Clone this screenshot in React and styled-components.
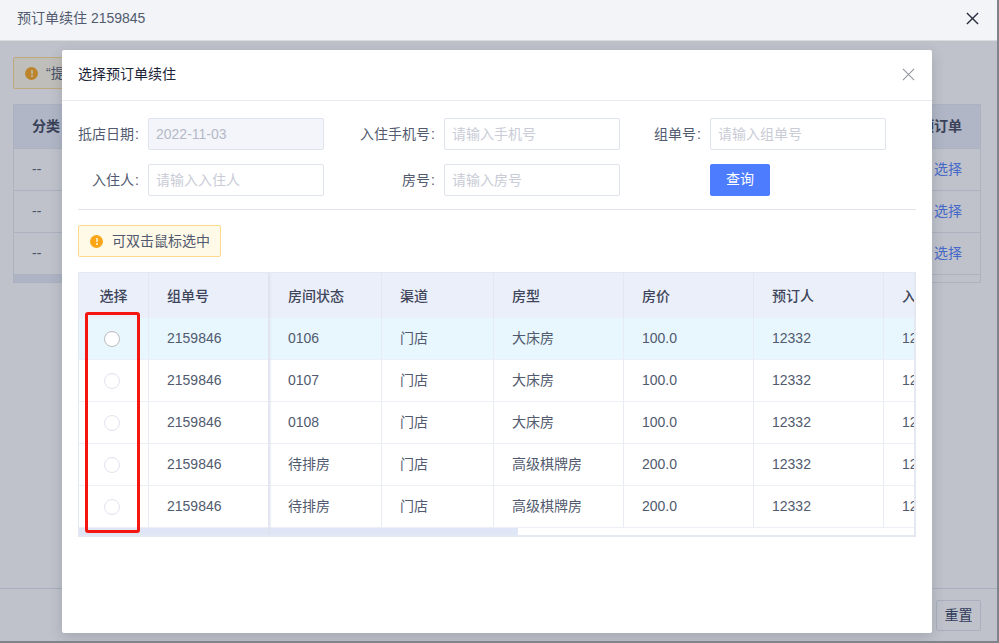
import React from "react";
import styled, { createGlobalStyle } from "styled-components";

const Global = createGlobalStyle`
  html, body {
    margin: 0;
    padding: 0;
    height: 100%;
    overflow: hidden;
    background: #fff;
    font-family: "Liberation Sans", "Noto Sans CJK SC", sans-serif;
    font-size: 14px;
    line-height: 20px;
    color: #515a6e;
  }
  * { box-sizing: border-box; }
`;

const Window = styled.div`
  position: relative;
  width: 999px;
  height: 643px;
  overflow: hidden;
  border-right: 2px solid #7f838c;
  border-bottom: 2px solid #7f838c;
  display: flex;
  flex-direction: column;
`;

const TopBar = styled.div`
  height: 41px;
  flex: none;
  display: flex;
  align-items: center;
  justify-content: space-between;
  padding: 0 18px 4px 17px;
  background: #f2f4f8;
  border-bottom: 1px solid #d9dbdf;
  color: #515a6e;
`;

const Body = styled.div`
  position: relative;
  flex: 1;
  display: flex;
  flex-direction: column;
  padding: 16px 16px 0 13px;
  background: #fff;
`;

const Notice = styled.div`
  display: flex;
  align-items: center;
  gap: ${(p) => p.$gap || 8}px;
  width: ${(p) => p.$width || "auto"};
  height: 32px;
  margin-top: ${(p) => p.$top || 0}px;
  padding: 0 11px;
  background: #fff9e8;
  border: 1px solid #ffd98c;
  border-radius: 2px;
  color: #515a6e;
  white-space: nowrap;
`;

const Dot = styled.span`
  width: 13px;
  height: 13px;
  flex: none;
  border-radius: 50%;
  background: #fba617;
  position: relative;
  &::after {
    content: "";
    position: absolute;
    left: 5.5px;
    top: 3px;
    width: 2px;
    height: 7px;
    background: linear-gradient(#ffe3ad 0 4px, transparent 4px 5px, #ffe3ad 5px);
  }
`;

const BackTable = styled.div`
  margin-top: 15px;
  height: 179px;
  border: 1px solid #e4e7f0;
`;

const BackRow = styled.div`
  display: flex;
  justify-content: space-between;
  align-items: center;
  height: ${(p) => (p.$head ? 44 : 42)}px;
  padding: 0 18px 2px;
  border-bottom: 1px solid #e4e7f0;
  background: ${(p) => (p.$head ? "#e9edf8" : "#fff")};
  font-weight: ${(p) => (p.$head ? 700 : 400)};
  color: ${(p) => (p.$head ? "#3b4257" : "#515a6e")};
`;

const BackLink = styled.span`
  color: #4d7cfe;
`;

const BackThumb = styled.div`
  width: 200px;
  height: 7px;
  background: #e6eaf6;
`;

const Footer = styled.div`
  position: absolute;
  left: 0;
  right: 0;
  bottom: 0;
  height: 53px;
  display: flex;
  justify-content: flex-end;
  align-items: center;
  padding-right: 16px;
  border-top: 1px solid #dfe3ee;
`;

const GhostButton = styled.button`
  width: 45px;
  height: 31px;
  padding: 0;
  background: #fff;
  border: 1px solid #dfe3ee;
  border-radius: 2px;
  color: #2f3a5c;
  font: inherit;
`;

const Overlay = styled.div`
  position: absolute;
  inset: 0;
  background: rgba(55, 65, 90, 0.32);
`;

const Modal = styled.div`
  position: absolute;
  left: 62px;
  top: 9px;
  width: 870px;
  height: 583px;
  background: #fff;
  border-radius: 2px;
  box-shadow: 0 4px 14px rgba(40, 45, 60, 0.18);
  display: flex;
  flex-direction: column;
`;

const ModalHead = styled.div`
  height: 51px;
  flex: none;
  display: flex;
  align-items: center;
  justify-content: space-between;
  padding: 0 17px 2px 16px;
  border-bottom: 1px solid #e8eaf0;
  color: #1c2438;
`;

const ModalBody = styled.div`
  padding: 17px 16px 0;
  display: flex;
  flex-direction: column;
`;

const SearchForm = styled.div`
  display: grid;
  grid-template-columns: 70px 176px 120px 176px 90px 176px;
  grid-auto-rows: 32px;
  row-gap: 14px;
  padding-bottom: 13px;
  border-bottom: 1px solid #e1e4ec;
`;

const Label = styled.label`
  display: flex;
  align-items: center;
  justify-content: flex-end;
  padding-right: 9px;
  color: #515a6e;
  white-space: nowrap;
`;

const Colon = styled.span`
  margin-left: 1px;
`;

const Input = styled.input`
  width: 100%;
  height: 32px;
  padding: 0 7px;
  border: 1px solid #dfe3ee;
  border-radius: 2px;
  background: ${(p) => (p.disabled ? "#f3f5fa" : "#fff")};
  color: #b4b9c6;
  font: inherit;
  outline: none;
  &::placeholder {
    color: #c9ccd6;
  }
`;

const PrimaryButton = styled.button`
  width: 60px;
  height: 32px;
  padding: 0 0 2px;
  border: 0;
  border-radius: 2px;
  background: #4d7cfe;
  color: #fff;
  font: inherit;
`;

const TableWrap = styled.div`
  position: relative;
  margin-top: 15px;
  height: 265px;
  border: 2px solid #e4e8f2;
  border-width: 1px 2px 2px 1px;
  overflow: hidden;
`;

const Row = styled.div`
  display: grid;
  grid-template-columns: 70px 121px 112px 112px 130px 130px 130px 130px;
  height: ${(p) => (p.$head ? 45 : 42)}px;
  background: ${(p) => (p.$head ? "#ebeffa" : p.$active ? "#e8f6fe" : "#fff")};
  border-bottom: ${(p) => (p.$head ? 0 : "1px solid #edeff6")};
  color: ${(p) => (p.$head ? "#3f465c" : "#515a6e")};
  font-weight: ${(p) => (p.$head ? 500 : 400)};
`;

const Cell = styled.div`
  display: flex;
  align-items: center;
  justify-content: ${(p) => (p.$center ? "center" : "flex-start")};
  padding: 0 0 ${(p) => (p.$head ? 0 : 2)}px ${(p) => (p.$center ? 0 : 18)}px;
  border-right: 1px solid ${(p) => (p.$head ? "#e3e7f3" : "#e8eaf4")};
  white-space: nowrap;
  overflow: hidden;
`;

const Radio = styled.span`
  width: 16px;
  height: 16px;
  margin: 2px 4px 0 0;
  border-radius: 50%;
  background: #fff;
  border: 1px solid ${(p) => (p.$active ? "#bcbcbc" : "#e1e4ee")};
`;

const ScrollBar = styled.div`
  height: 9px;
  background: #fff;
`;

const ScrollThumb = styled.div`
  width: 439px;
  height: 8px;
  background: #dfe6f6;
`;

const FixedEdge = styled.div`
  position: absolute;
  left: 189px;
  top: 0;
  bottom: 0;
  width: 4px;
  background: linear-gradient(90deg, #dfe2ee, rgba(223, 226, 238, 0));
  pointer-events: none;
`;

const Marker = styled.div`
  position: absolute;
  left: 23px;
  top: 262px;
  width: 55px;
  height: 221px;
  border: 3px solid #f5160f;
  border-radius: 3px;
  pointer-events: none;
`;

const rows = [
  ["0106", "大床房", "100.0"],
  ["0107", "大床房", "100.0"],
  ["0108", "大床房", "100.0"],
  ["待排房", "高级棋牌房", "200.0"],
  ["待排房", "高级棋牌房", "200.0"],
];

const Cross = ({ size, color, width }) => (
  <svg width={size} height={size} viewBox="0 0 14 14" fill="none" stroke={color} strokeWidth={width}>
    <path d="M1 1L13 13M13 1L1 13" />
  </svg>
);

export default function App() {
  return (
    <Window>
      <Global />
      <TopBar>
        <span>预订单续住 2159845</span>
        <Cross size={13} color="#2b3040" width={1.5} />
      </TopBar>
      <Body>
        <Notice $width="500px">
          <Dot />
          “提
        </Notice>
        <BackTable>
          <BackRow $head>
            <span>分类</span>
            <span>预订单</span>
          </BackRow>
          {[0, 1, 2].map((i) => (
            <BackRow key={i}>
              <span>--</span>
              <BackLink>选择</BackLink>
            </BackRow>
          ))}
          <BackThumb />
        </BackTable>
        <Footer>
          <GhostButton>重置</GhostButton>
        </Footer>
        <Overlay />
        <Modal>
          <ModalHead>
            <span>选择预订单续住</span>
            <Cross size={13} color="#8f949e" width={1.1} />
          </ModalHead>
          <ModalBody>
            <SearchForm>
              <Label>抵店日期<Colon>:</Colon></Label>
              <Input disabled value="2022-11-03" readOnly />
              <Label>入住手机号<Colon>:</Colon></Label>
              <Input placeholder="请输入手机号" />
              <Label>组单号<Colon>:</Colon></Label>
              <Input placeholder="请输入组单号" />
              <Label>入住人<Colon>:</Colon></Label>
              <Input placeholder="请输入入住人" />
              <Label>房号<Colon>:</Colon></Label>
              <Input placeholder="请输入房号" />
              <span />
              <PrimaryButton>查询</PrimaryButton>
            </SearchForm>
            <Notice $width="143px" $gap={9} $top={15}>
              <Dot />
              可双击鼠标选中
            </Notice>
            <TableWrap>
              <Row $head>
                <Cell $head $center>选择</Cell>
                <Cell $head>组单号</Cell>
                <Cell $head>房间状态</Cell>
                <Cell $head>渠道</Cell>
                <Cell $head>房型</Cell>
                <Cell $head>房价</Cell>
                <Cell $head>预订人</Cell>
                <Cell $head>入住人</Cell>
              </Row>
              {rows.map((r, i) => (
                <Row key={i} $active={i === 0}>
                  <Cell $center>
                    <Radio $active={i === 0} />
                  </Cell>
                  <Cell>2159846</Cell>
                  <Cell>{r[0]}</Cell>
                  <Cell>门店</Cell>
                  <Cell>{r[1]}</Cell>
                  <Cell>{r[2]}</Cell>
                  <Cell>12332</Cell>
                  <Cell>12332</Cell>
                </Row>
              ))}
              <ScrollBar>
                <ScrollThumb />
              </ScrollBar>
              <FixedEdge />
            </TableWrap>
          </ModalBody>
          <Marker />
        </Modal>
      </Body>
    </Window>
  );
}
